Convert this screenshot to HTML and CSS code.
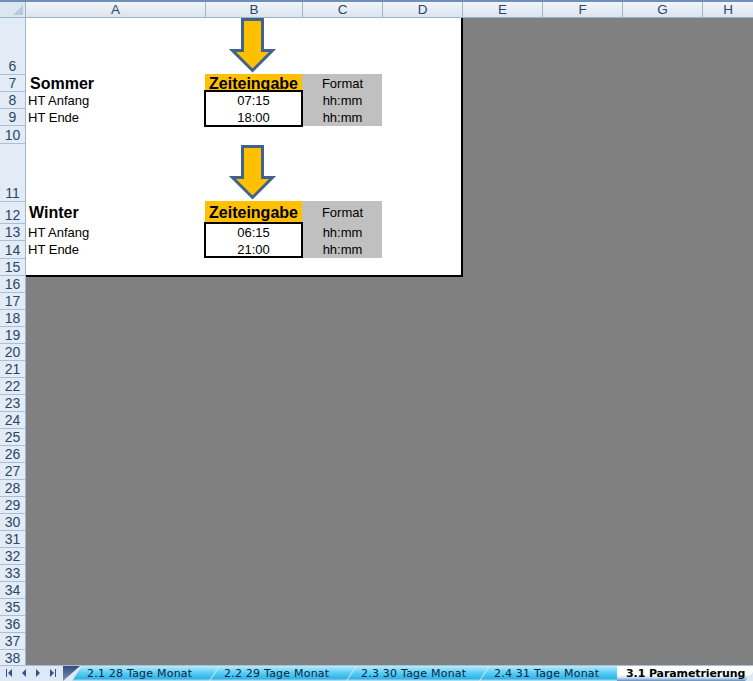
FILE: index.html
```html
<!DOCTYPE html>
<html lang="de">
<head>
<meta charset="utf-8">
<title>3.1 Parametrierung</title>
<link rel="stylesheet" href="styles.css">
</head>
<body>
<div class="app">
  <div class="colhead">
    <div class="corner"><svg class="corner-tri" width="12" height="12" viewBox="0 0 12 12"><path d="M11 1V11H1Z" fill="#b9c9dc"/></svg></div>
    <div class="col c-a">A</div>
    <div class="col c-b">B</div>
    <div class="col c-c">C</div>
    <div class="col c-d">D</div>
    <div class="col c-e">E</div>
    <div class="col c-e">F</div>
    <div class="col c-e">G</div>
    <div class="col c-h">H</div>
  </div>
  <div class="main">
    <div class="rowhead">
      <div class="rn h57">6</div>
      <div class="rn h17">7</div>
      <div class="rn h17">8</div>
      <div class="rn h17">9</div>
      <div class="rn h18">10</div>
      <div class="rn h58">11</div>
      <div class="rn h22">12</div>
      <div class="rn h17">13</div>
      <div class="rn h18">14</div>
      <div class="rn h17">15</div>
      <div class="rn h17">16</div>
      <div class="rn h17">17</div>
      <div class="rn h17">18</div>
      <div class="rn h17">19</div>
      <div class="rn h17">20</div>
      <div class="rn h17">21</div>
      <div class="rn h17">22</div>
      <div class="rn h17">23</div>
      <div class="rn h17">24</div>
      <div class="rn h17">25</div>
      <div class="rn h17">26</div>
      <div class="rn h17">27</div>
      <div class="rn h17">28</div>
      <div class="rn h17">29</div>
      <div class="rn h17">30</div>
      <div class="rn h17">31</div>
      <div class="rn h17">32</div>
      <div class="rn h17">33</div>
      <div class="rn h17">34</div>
      <div class="rn h17">35</div>
      <div class="rn h17">36</div>
      <div class="rn h17">37</div>
      <div class="rn h17">38</div>
    </div>
    <div class="canvas">
      <div class="page">
        <div class="title r7">Sommer</div>
        <div class="head r7">Zeiteingabe</div>
        <div class="fmt fmt-h r7">Format</div>
        <div class="lab r8">HT Anfang</div>
        <div class="val r8">07:15</div>
        <div class="fmt r8">hh:mm</div>
        <div class="lab r9">HT Ende</div>
        <div class="val r9">18:00</div>
        <div class="fmt r9">hh:mm</div>
        <div class="box box-1"></div>

        <div class="title title-w r12">Winter</div>
        <div class="head head-w r12">Zeiteingabe</div>
        <div class="fmt fmt-w r12">Format</div>
        <div class="lab r13">HT Anfang</div>
        <div class="val r13">06:15</div>
        <div class="fmt r13">hh:mm</div>
        <div class="lab r14">HT Ende</div>
        <div class="val r14">21:00</div>
        <div class="fmt r14">hh:mm</div>
        <div class="box box-2"></div>

        <svg class="arrow arrow-1" width="49" height="56" viewBox="0 0 49 56"><path d="M14.5 1.5H34.5V32.5H44.5L24.5 52.5L4.5 32.5H14.5Z" fill="#ffc000" stroke="#41628e" stroke-width="3"/></svg>
        <svg class="arrow arrow-2" width="49" height="56" viewBox="0 0 49 56"><path d="M14.5 1.5H34.5V32.5H44.5L24.5 52.5L4.5 32.5H14.5Z" fill="#ffc000" stroke="#41628e" stroke-width="3"/></svg>
      </div>
    </div>
  </div>
  <div class="tabbar">
    <div class="nav">
      <svg width="60" height="16" viewBox="0 0 60 16">
        <path d="M6 3H7V11H6ZM12 3V11L8 7Z" fill="#2e5687"/>
        <path d="M26 3V11L22 7Z" fill="#2e5687"/>
        <path d="M36 3V11L40 7Z" fill="#2e5687"/>
        <path d="M50 3V11L54 7ZM55 3H56V11H55Z" fill="#2e5687"/>
      </svg>
    </div>
    <div class="tabs">
      <div class="swatch"></div>
      <div class="tab tab-1">2.1 28 Tage Monat</div>
      <div class="tab tab-2">2.2 29 Tage Monat</div>
      <div class="tab tab-3">2.3 30 Tage Monat</div>
      <div class="tab tab-4">2.4 31 Tage Monat</div>
      <div class="tab active">3.1 Parametrierung</div>
    </div>
  </div>
</div>
</body>
</html>
```
FILE: styles.css
```css
* { box-sizing: border-box; }
html, body { margin: 0; padding: 0; }
body { width: 753px; height: 681px; overflow: hidden; font-family: "Liberation Sans", Arial, sans-serif; }
.app { width: 753px; height: 681px; display: flex; flex-direction: column; background: #808080; }

.colhead { display: flex; height: 18px; flex: none; border-top: 2px solid #6d90b8; border-bottom: 1px solid #9db3cc; background: linear-gradient(#f2f5fa, #dde4ef); }
.corner { width: 26px; flex: none; background: #dce6f3; border-right: 1px solid #9eb6ce; display: flex; align-items: flex-end; justify-content: flex-end; }
.corner-tri { display: block; margin: 0 1px 1px 0; }
.col { flex: none; border-right: 1px solid #9eb6ce; display: flex; align-items: center; justify-content: center; font-size: 13.5px; color: #2c4668; line-height: 15px; }
.c-a { width: 180px; }
.c-b { width: 97px; }
.c-c { width: 80px; }
.c-d { width: 80px; }
.c-e { width: 80px; }
.c-h { width: 50px; border-right: 0; }

.main { flex: 1; min-height: 0; display: flex; overflow: hidden; }
.rowhead { width: 26px; flex: none; background: #e3ebf6; border-right: 1px solid #9eb6ce; }
.rn { border-bottom: 1px solid #a9bfd6; display: flex; align-items: flex-end; justify-content: center; font-size: 14px; line-height: 15px; color: #2c4668; }
.h17 { height: 17px; }
.h18 { height: 18px; }
.h22 { height: 22px; }
.h57 { height: 57px; }
.h58 { height: 58px; }

.canvas { flex: 1; background: #808080; }
.page {
  position: relative; width: 437px; height: 259px; overflow: hidden; background: #fff;
  border-right: 2px solid #000; border-bottom: 2px solid #000;
  display: grid;
  grid-template-columns: 179px 97px 80px;
  grid-template-rows: 56px 17px 17px 18px 18px 57px 21px 18px 18px;
}
.r7 { grid-row: 2; }
.r8 { grid-row: 3; }
.r9 { grid-row: 4; }
.r12 { grid-row: 7; }
.r13 { grid-row: 8; }
.r14 { grid-row: 9; }

.title { grid-column: 1; font-size: 16px; font-weight: bold; line-height: 19px; padding-left: 4px; color: #000; white-space: nowrap; }
.title-w { padding-left: 3px; line-height: 23px; }
.lab { grid-column: 1; font-size: 13px; line-height: 19px; padding-left: 2px; color: #000; white-space: nowrap; }
.head { grid-column: 2; background: #ffc000; font-size: 16px; font-weight: bold; line-height: 20px; text-align: center; color: #000; overflow: hidden; white-space: nowrap; }
.head-w { line-height: 23px; }
.val { grid-column: 2; font-size: 13px; line-height: 19px; text-align: center; color: #000; overflow: hidden; }
.fmt { grid-column: 3; background: #c0c0c0; font-size: 13px; line-height: 19px; padding-left: 1px; text-align: center; color: #000; overflow: hidden; }
.fmt-w { line-height: 23px; }
.lab.r13, .val.r13, .fmt.r13 { line-height: 21px; }
.box { grid-column: 2; border: 2px solid #000; margin: -1px; pointer-events: none; }
.box-1 { grid-row: 3 / span 2; }
.box-2 { grid-row: 8 / span 2; margin-top: 0; margin-bottom: 0; }

.arrow { position: absolute; left: 202px; display: block; }
.arrow-1 { top: 0; }
.arrow-2 { top: 127px; }

.tabbar { height: 16px; flex: none; display: flex; background: #dfe8f4; border-top: 1px solid #a9bfd6; }
.nav { width: 63px; flex: none; }
.nav svg { display: block; }
.tabs { flex: 1; display: flex; min-width: 0; overflow: hidden; }
.swatch { width: 17px; flex: none; background: linear-gradient(#2f4d7c, #7f95b5); clip-path: polygon(0 0, 100% 0, 0 100%); }
.tab {
  flex: none; height: 15px; margin-left: -10px; padding-left: 14px; font-family: "DejaVu Sans", sans-serif; font-size: 11px; letter-spacing: 0.22px; line-height: 16px; color: #10243c; white-space: nowrap;
  background: linear-gradient(#b7ecfc, #5ccdf4 45%, #2db4ea 85%, #cfe6f4);
  clip-path: polygon(10px 0, calc(100% - 1px) 0, calc(100% - 11px) 100%, 0 100%);
}
.tab-1 { width: 148px; margin-left: -8px; padding-left: 15px; }
.tab-2 { width: 147px; }
.tab-3 { width: 143px; }
.tab-4 { width: 137px; clip-path: polygon(10px 0, 100% 0, 100% 100%, 0 100%); }
.active {
  flex: 1; margin-left: 0; padding-left: 9px; font-weight: bold; letter-spacing: -0.1px; color: #000;
  background: linear-gradient(#fff 60%, #c7dbec 80%, #5c8cc0);
  clip-path: polygon(0 0, 100% 0, 100% 40%, calc(100% - 8px) 100%, 0 100%);
}
```
